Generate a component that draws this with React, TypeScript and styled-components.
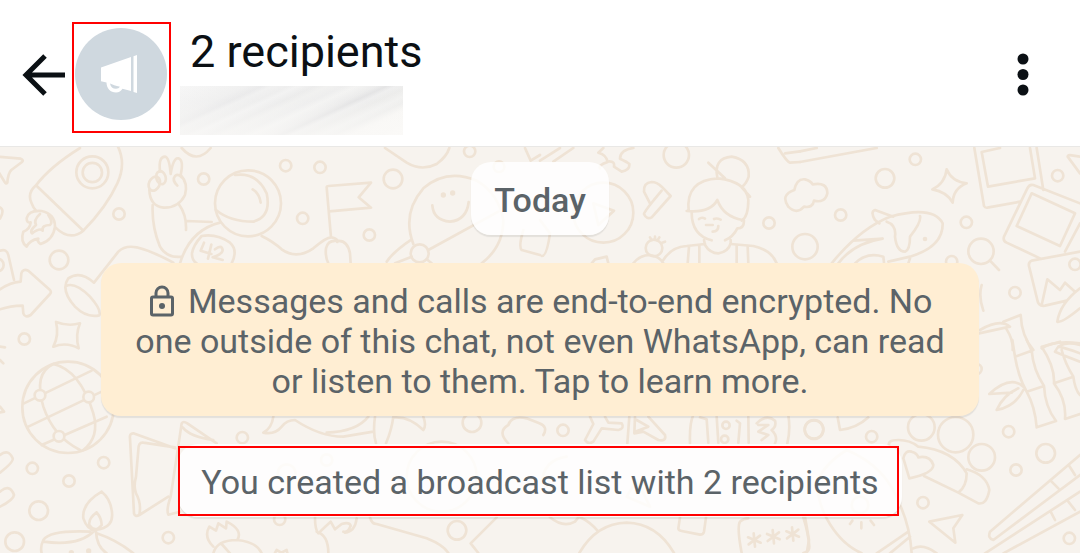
import React from "react";
import styled, { createGlobalStyle } from "styled-components";

const ink = "#0b1014";
const muted = "#5b6368";
const sand = "#f7f3ee";
const doodle = "#efe3d5";
const marker = "#ff0000";

const GlobalStyle = createGlobalStyle`
  * { box-sizing: border-box; }
  body {
    margin: 0;
    background: ${sand};
    font-family: Roboto, "Liberation Sans", sans-serif;
  }
  button {
    border: 0;
    padding: 0;
    background: none;
    font: inherit;
    color: inherit;
    cursor: pointer;
  }
`;

const Screen = styled.div`
  display: flex;
  flex-direction: column;
  min-height: 100vh;
`;

const Header = styled.header`
  display: flex;
  align-items: flex-start;
  padding: 22px 45px 11px 19px;
  background: #fff;
  border-bottom: 1px solid #e9e8e6;
`;

const IconButton = styled.button<{ $width: number }>`
  display: flex;
  align-items: center;
  justify-content: center;
  flex: none;
  width: ${(p) => p.$width}px;
  height: 105px;
  color: ${ink};
`;

const AvatarButton = styled.button`
  flex: none;
  margin-left: 5px;
  padding: 4px 2px 11px 1px;
  border: 2px solid ${marker};
`;

const Avatar = styled.span`
  display: block;
  width: 92px;
  height: 92px;
  border-radius: 50%;
  background: #cfd8df;
`;

const Heading = styled.div`
  flex: 1;
  min-width: 0;
  margin-left: 9px;
`;

const Title = styled.h1`
  margin: 0;
  padding-left: 10px;
  font-size: 45px;
  font-weight: 400;
  line-height: 60px;
  color: ${ink};
`;

const HiddenNames = styled.div`
  width: 223px;
  height: 49px;
  margin-top: 4px;
  background:
    linear-gradient(to bottom, rgba(250, 249, 247, 0.1) 30%, rgba(250, 249, 247, 0.7)),
    linear-gradient(
      155deg,
      #f6f6f6 0%, #f2f2f2 12%, #efefef 20%, #e9e9ea 25%, #f0f0f0 28%,
      #ededed 33%, #f2f2f2 36%, #ebebeb 41%, #f0f0ef 45%, #ededed 50%,
      #f3f3f2 54%, #ebebeb 60%, #e2e2e3 63%, #eeeeee 66%, #ebebea 70%,
      #f1f1f0 75%, #ededec 79%, #f8f7f5 84%, #fbfaf8 100%
    );
`;

const Chat = styled.main`
  position: relative;
  display: flex;
  flex: 1;
  flex-direction: column;
  align-items: center;
  gap: 28px;
  padding: 15px 101px 34px;
  overflow: hidden;
  isolation: isolate;
`;

const Wallpaper = styled.svg`
  position: absolute;
  inset: 0;
  z-index: -1;
  width: 100%;
  height: 100%;
  fill: none;
  stroke: ${doodle};
  stroke-width: 8;
  stroke-linecap: round;
  stroke-linejoin: round;
`;

const Bubble = styled.div<{ $strong?: boolean }>`
  position: relative;
  padding: 18px 23px 14px;
  border-radius: 20px;
  background: rgba(255, 255, 255, 0.84);
  box-shadow: 0 2px 1px rgba(60, 60, 60, 0.1);
  color: ${muted};
  font-size: 34px;
  font-weight: ${(p) => (p.$strong ? 500 : 400)};
  line-height: 41px;
  text-align: center;
`;

const Marker = styled.span`
  position: absolute;
  inset: 2px 3px 1px 0;
  border: 2px solid ${marker};
  pointer-events: none;
`;

const Notice = styled.button`
  width: 100%;
  padding: 18px 32px 15px;
  border-radius: 20px;
  background: #ffeed3;
  box-shadow: 0 2px 1px rgba(60, 60, 60, 0.1);
  && {
    color: ${muted};
    font-size: 34px;
    line-height: 40px;
  }
`;

const Lock = styled.svg`
  width: 26px;
  height: 32px;
  margin: 0 4px 0 2px;
  vertical-align: -4px;
`;

type Dot = [number, number, number];

function Rings({ items }: { items: Dot[] }) {
  return (
    <>
      {items.map(([x, y, r]) => (
        <circle key={`${x}-${y}`} cx={x} cy={y} r={r > 20 ? r : r - 1} />
      ))}
    </>
  );
}

function Asterisk({ x, y }: { x: number; y: number }) {
  return <path d={`M${x - 2} ${y - 20}l4 40M${x - 19} ${y - 8}l38 16M${x - 17} ${y + 13}l34 -26`} />;
}

function Doodles() {
  return (
    <Wallpaper viewBox="0 0 3240 1218" preserveAspectRatio="xMidYMin slice" aria-hidden="true">
      {/* rocket, astronaut, arrow */}
      <g transform="translate(0 -21)">
        <Rings items={[[357, 222, 18], [177, 360, 28], [611, 117, 18], [73, 597, 18], [-8, 375, 20], [277, 97, 48], [277, 97.5, 29], [744, 190, 99]]} />
        <path d="M-5 50L62 56Q72 60 66 66L34 90Q24 100 22 128Q18 134 14 126L-5 95M0 202Q15 210 0 236M0 332Q20 325 25 345L42 420" />
        <path d="M108 136Q150 80 240 24M352 16Q380 70 352 130Q320 200 250 272L108 136Q80 160 95 190Q100 204 108 212M166 262Q210 305 250 272" />
        <path d="M80 235Q85 210 125 213Q165 222 165 260Q160 300 122 312Q110 305 115 296Q90 300 80 320Q60 305 70 275Q90 268 92 247Q80 250 80 235M120 222Q100 240 108 255Q88 272 96 280Q120 262 128 272Q125 255 150 255Q160 248 145 225" />
        <path d="M0 448Q30 428 62 425L64 400Q68 385 85 392L150 450Q155 456 150 462L92 525Q75 535 70 520L68 497Q30 498 0 508" />
        <path d="M168 546Q205 560 240 550Q225 585 236 625Q200 605 160 620Q178 585 168 546" />
        <path d="M282 428L355 335Q375 315 410 322Q460 335 520 368M282 428Q240 390 205 415Q180 450 225 500Q260 535 298 526Q305 510 270 470Q225 425 198 438" />
        <path d="M480 95Q475 50 495 50Q508 52 512 102Q520 52 535 55Q552 60 542 105Q565 130 555 165Q535 205 490 203Q450 198 448 150M532 137Q515 120 525 108Q535 100 545 112" />
        <ellipse cx="463" cy="131" rx="16" ry="22" transform="rotate(25 463 131)" />
        <ellipse cx="483" cy="113" rx="14" ry="20" transform="rotate(-15 483 113)" />
        <path d="M458 195Q455 260 480 320Q500 355 545 350M538 195Q560 225 558 270M560 243L635 246M540 370Q570 270 660 248" />
        <path d="M705 105Q770 95 800 160Q815 230 760 245Q690 245 648 210M758 148Q778 160 782 188M545 24Q590 75 632 24" />
        <path d="M695 370Q715 330 690 308Q650 280 605 288Q580 315 576 340Q575 360 590 370M612 308L602 332L634 342M634 314L624 356M645 328Q665 312 668 330Q668 342 638 352L668 360" />
      </g>
      {/* flag, smiling planet */}
      <g transform="translate(780 -21)">
        <Rings items={[[77, 77, 18], [180, 82, 18], [399, 117, 28], [128, 235, 18], [328, 285, 18], [629, 34, 18], [717, 80, 17], [479, 340, 27]]} />
        <path d="M5 288Q40 305 65 328Q110 360 160 325Q200 290 215 292Q235 296 232 306M213 292L200 142Q200 138 205 138L333 128L296 172L333 203L208 214" />
        <path d="M205 370Q195 350 198 325Q204 300 230 303Q262 298 270 340L272 370M375 24L440 68Q485 95 530 72Q560 50 568 24" />
        <path d="M460 312Q425 220 490 145Q560 85 650 122Q715 160 730 240Q730 320 665 370M517 196Q520 240 570 245Q620 240 626 186M505 330L715 215M455 298Q400 335 380 365M405 370L455 350M500 358L515 370" />
        <g fill={doodle} stroke="none"><circle cx="550" cy="165" r="8" /><circle cx="578" cy="159" r="8" /></g>
        <path d="M795 24L812 62L840 45M790 270Q775 320 785 330L840 345" />
      </g>
      {/* puzzle, pen, portrait */}
      <g transform="translate(1620 -21)">
        <Rings items={[[409, 45, 38], [190, 218, 90], [687, 249, 18], [342, 324, 25], [795, 320, 38]]} />
        <path d="M0 62L60 24M40 65L100 24M180 85Q175 75 203 66Q200 45 175 38L190 24M208 64Q225 64 222 80L245 95Q270 90 268 72Q262 66 240 56Q240 30 280 24M160 190L222 212L175 255Z" />
        <path d="M330 190L312 155Q310 128 335 126Q350 126 365 140L392 168L335 232Q320 240 312 222Q312 215 365 152" />
        <path d="M532 112Q520 55 575 50Q630 60 626 110Q620 130 605 142L630 170M505 68L555 115M446 213Q436 120 535 115Q620 125 625 180Q625 230 605 242M440 213Q510 220 532 180Q550 230 608 240" />
        <path d="M455 218Q455 285 515 301M612 242Q612 265 592 265Q580 290 555 301M492 300L495 315Q510 340 535 340Q565 335 572 310L572 300M477 237Q485 230 495 236M522 237Q530 233 542 239M498 255L518 255M535 258Q535 275 518 275" />
        <path d="M370 360Q395 320 440 318L495 312M572 312L640 318Q695 330 710 370M447 320L443 370M478 318L478 370M590 318L590 370M623 320L625 370" />
        <path d="M280 370Q300 345 330 345Q360 350 370 370M330 292L335 300M345 290L345 300M358 292L352 302M375 305L366 308M155 370L165 358L200 350L205 370M0 240L30 280Q20 350 5 348M715 24Q740 65 750 68L780 66M735 40L780 34" />
      </g>
      {/* whale, snapshots, star */}
      <g transform="translate(2400 -21)">
        <Rings items={[[346, 58, 18], [255, 115, 28], [122, 225, 18], [499, 247, 18], [543, 334, 38], [455, 365, 18], [773, 107, 18], [645, 458, 18], [825, 373, 18]]} />
        <path d="M0 66L230 24M0 34L50 24M-35 200Q-60 165 -17 150Q-10 115 15 118Q32 122 38 133Q82 125 82 160Q75 190 42 182Q38 205 12 200Q-10 225 -35 200" />
        <path d="M440 88Q455 125 500 130Q460 145 458 188Q440 155 397 148Q435 130 440 88M570 362L597 390" />
        <path d="M95 370Q180 265 270 230Q400 195 428 250Q430 320 330 350L265 365M280 230L225 210Q210 215 225 240L238 250M160 302L248 296Q160 310 115 370M260 245Q290 255 285 290Q290 335 315 335Q330 330 330 290Q365 245 360 228M165 370Q200 335 250 350L252 368M330 355L325 370" />
        <circle cx="375" cy="297" r="7" fill={doodle} stroke="none" />
        <path d="M523 24L552 198Q555 204 562 203L660 185M710 24L730 150M600 24L545 36L564 140L705 115L690 24M840 190L700 135Q688 132 682 145L612 290Q608 302 620 308L720 355M840 250L795 335M695 160L825 220L780 318L650 258ZM840 100L803 50Q803 44 815 46L840 50" />
        <path d="M840 335L695 362Q683 368 688 382L712 480Q715 500 735 497L800 482M725 495L742 418L780 450L795 428L825 455M840 445Q780 490 772 545Q785 550 840 505M545 435Q535 470 550 512M537 580L630 560Q600 535 540 570M610 545L662 525Q665 590 700 630M620 568Q640 600 638 630M725 625Q760 600 840 610" />
      </g>
      {/* globe, map, lamp */}
      <g transform="translate(0 579)">
        <Rings items={[[204, 202, 137], [97, 385, 18], [207, 423, 18], [311, 368, 18], [116, 512, 28], [44, 605, 28], [505, 593, 18], [727, 293, 18]]} />
        <path d="M72 190L275 92M85 260L305 155M125 315L320 230M160 72Q100 100 130 200Q160 290 240 330M160 72Q240 90 280 220Q300 290 250 330" />
        <g fill={sand}><circle cx="120" cy="166" r="16" /><circle cx="266" cy="171" r="16" /><circle cx="177" cy="289" r="16" /></g>
        <path d="M0 345Q25 325 38 355Q42 365 0 398M0 455Q30 430 42 465Q40 480 0 500M0 200L12 215L0 217M0 20L15 22M0 60L10 70" />
        <path d="M525 325L400 280Q388 280 390 295L402 520Q405 532 418 525L505 470M525 322L430 308Q415 305 415 330L408 410Q400 440 408 460Q425 490 418 525M540 515L505 524Q498 510 512 470L545 250Q550 242 562 250L650 310M548 262Q570 290 640 300" />
        <path d="M305 455Q245 490 250 535Q262 570 285 570Q345 565 335 510Q330 475 305 455M290 517Q265 535 268 555Q285 580 305 555Q305 535 290 517M270 575Q150 570 130 600Q120 620 125 640M130 605Q240 620 285 570M288 575Q290 620 320 640M290 580Q350 600 400 640" />
        <path d="M640 620Q610 590 628 560L648 572L655 550L678 565L680 545Q730 570 712 600M640 640Q650 600 710 600Q770 605 785 640M665 612L690 640" />
        <g fill={doodle} stroke="none"><circle cx="214" cy="638" r="8" /><circle cx="266" cy="633" r="8" /></g>
      </g>
      {/* bird, dog */}
      <g transform="translate(780 759)">
        <Rings items={[[636, 68, 28], [59, 358, 18], [591, 391, 28], [200, 180, 18], [545, 230, 105], [80, 220, 27]]} />
        <path d="M40 50Q35 85 10 98Q45 105 65 80Q80 60 105 60Q180 110 250 110L340 95M200 98Q290 95 325 50M345 50Q338 100 348 130M400 50Q395 90 378 130M405 52Q450 50 490 90Q500 75 490 50M745 130Q710 95 745 75Q755 45 800 55L838 70Q865 80 850 105" />
        <path d="M165 352Q165 390 175 400Q195 380 212 365L225 388L245 372Q270 365 272 378Q262 400 250 395M290 355Q285 395 255 398M170 395Q205 405 205 459M330 352Q335 372 350 372L500 415Q550 435 565 459M710 352L632 430Q640 440 655 459M45 459L50 450L64 458L80 450L82 459" />
      </g>
      {/* clock, password box */}
      <g transform="translate(1620 759)">
        <Rings items={[[69, 91, 18], [822, 88, 28], [558, 76, 12], [554, 118, 12]]} />
        <path d="M150 50L160 72L135 120Q145 135 160 125L185 85L235 90Q255 85 245 70L205 68L195 50M268 50L262 130M285 50L283 100L310 95L355 120Q380 125 375 105L325 50M290 60L325 80L285 95" />
        <path d="M450 130Q448 70 460 45M745 45Q752 90 742 130M480 52L500 58L505 128M530 50L535 128M590 62L600 70L595 128M625 50L626 128M650 70Q680 40 705 62Q710 80 695 90Q715 110 705 130M655 75L685 75L655 95L685 105L665 120" />
        <path d="M30 352Q70 385 105 365L115 352M120 352Q150 365 175 395M118 459Q170 370 260 368Q350 370 402 459M420 352L415 385Q415 392 425 393L480 404Q490 404 492 395L498 352M605 459Q590 380 600 365Q610 355 625 355M790 352Q805 400 808 440Q808 455 790 459" />
        <path d="M80 170Q10 180 5 250M260 290L290 240L330 320Z" />
        <Asterisk x={643} y={420} /><Asterisk x={700} y={410} /><Asterisk x={758} y={402} />
      </g>
      {/* bamboo, hot dog, chopsticks */}
      <g transform="translate(2400 579)">
        <Rings items={[[42, 269, 28], [215, 290, 18], [364, 262, 40], [467, 284, 53], [545, 352, 40], [626, 275, 18], [737, 340, 28], [648, 390, 18], [369, 488, 18], [808, 595, 18], [530, 87, 16], [180, 495, 25]]} />
        <path d="M637 0L645 50L695 32L680 0M645 50Q655 110 680 155L732 138Q700 90 695 32M680 155Q705 200 710 262L768 243Q735 200 732 138M780 5L725 20Q765 80 762 130L820 110Q795 70 785 30M762 130Q800 180 795 237L840 222M820 110Q825 150 840 165M670 140Q630 105 568 162L635 158M670 150Q645 200 590 210Q610 165 655 145M840 15Q780 0 765 35Q800 50 840 65M775 20Q800 25 840 40" />
        <path d="M113 232L120 270Q170 265 205 232M268 320Q260 300 295 300Q330 300 355 320Q460 330 500 400Q500 440 475 458L372 408M328 415L310 355Q315 330 335 335Q352 340 355 352Q390 345 400 375Q400 400 328 415M500 388Q560 405 568 450Q560 495 535 490L475 458" />
        <path d="M388 545L487 525L460 565L466 608ZM840 345L570 575Q562 595 580 600L840 405M840 455L555 640M840 515L610 640M755 425L775 445M808 378L825 405M752 515L765 540M805 485L825 510" />
        <path d="M150 552L157 542M184 565L184 547M222 555L212 542M140 330Q60 380 50 440Q60 500 80 535Q120 610 185 640M140 330Q260 380 300 495Q330 560 335 640M230 640L325 575M270 640L330 590M340 625Q370 610 410 640M15 530L27 600L20 640" />
      </g>
    </Wallpaper>
  );
}

export default function App() {
  return (
    <Screen>
      <GlobalStyle />
      <Header>
        <IconButton $width={48} type="button" aria-label="Back">
          <svg width="44" height="44" viewBox="0 0 44 44" fill="none" stroke="currentColor" strokeWidth="5">
            <path d="M44 22H5M24 3L5 22L24 41" />
          </svg>
        </IconButton>
        <AvatarButton type="button" aria-label="Broadcast list info">
          <Avatar>
            <svg width="92" height="92" viewBox="0 0 92 92" fill="#fff">
              <path d="M26 39.500L56 29V63L47.500 60.800C46 63.200 44 64.600 41 64.600C35.500 64.600 31.500 60.500 31.500 54.600L26 53.200Z" />
              <path d="M35 55.500Q36 60.800 41 60.800Q43.800 60.800 45 58.800L40 57.600Z" fill="#cfd8df" />
              <path d="M58.500 28.200L62 27V65L58.500 64Z" />
            </svg>
          </Avatar>
        </AvatarButton>
        <Heading>
          <Title>2 recipients</Title>
          <HiddenNames />
        </Heading>
        <IconButton $width={24} type="button" aria-label="More options">
          <svg width="12" height="44" viewBox="0 0 12 44" fill="currentColor">
            <circle cx="6" cy="6" r="5.500" />
            <circle cx="6" cy="21.500" r="5.500" />
            <circle cx="6" cy="37" r="5.500" />
          </svg>
        </IconButton>
      </Header>
      <Chat>
        <Doodles />
        <Bubble $strong>Today</Bubble>
        <Notice type="button">
          <Lock viewBox="0 0 26 32" aria-hidden="true" fill="none" stroke={muted} strokeWidth="3">
            <rect x="2.500" y="12" width="21" height="18" rx="1.500" />
            <path d="M7 12V8a6 6 0 0 1 12 0V12" />
            <circle cx="13" cy="21" r="3" fill={muted} stroke="none" />
          </Lock>{" "}
          Messages and calls are end-to-end encrypted. No one outside of this chat, not even WhatsApp, can read or
          listen to them. Tap to learn more.
        </Notice>
        <Bubble>
          You created a broadcast list with 2 recipients
          <Marker />
        </Bubble>
      </Chat>
    </Screen>
  );
}
